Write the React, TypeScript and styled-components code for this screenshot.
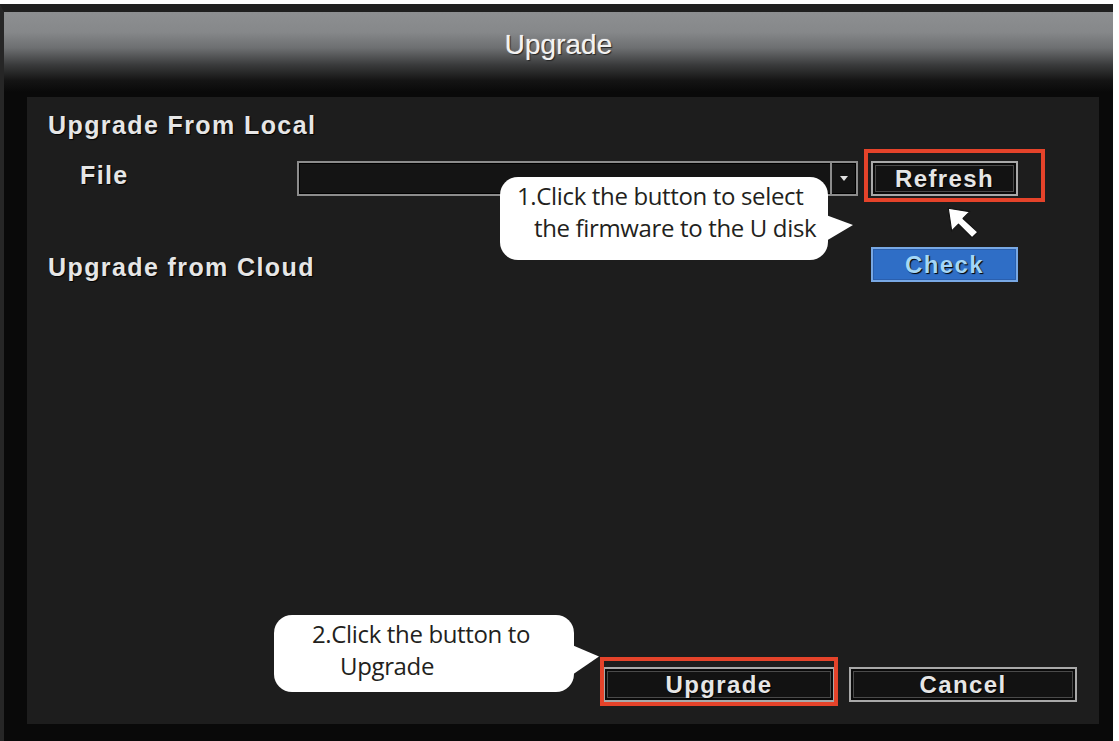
import React from "react";
import styled, { createGlobalStyle } from "styled-components";

const GlobalStyle = createGlobalStyle`
  html, body {
    margin: 0;
    padding: 0;
    background: #ffffff;
  }
  body {
    width: 1119px;
    height: 741px;
    overflow: hidden;
    font-family: "Liberation Sans", Arial, sans-serif;
  }
`;

const Window = styled.div`
  margin-top: 4px;
  width: 1113px;
  height: 737px;
  box-sizing: border-box;
  background: #090909;
  border-top: 8px solid #1f1f1f;
  border-left: 4px solid #262626;
  display: flex;
  flex-direction: column;
`;

const TitleBar = styled.div`
  height: 80px;
  flex-shrink: 0;
  display: flex;
  align-items: flex-start;
  justify-content: center;
  padding-top: 17px;
  box-sizing: border-box;
  background: linear-gradient(
    to bottom,
    #8d8f91 0%,
    #86888a 25%,
    #6d6f71 45%,
    #3a3b3c 66%,
    #141414 86%,
    #090909 100%
  );
`;

const Title = styled.div`
  font-size: 28px;
  line-height: 32px;
  color: #f2f2f2;
  text-shadow: 1px 1px 1px #222, 0 0 1px #fff;
`;

const Panel = styled.div`
  position: relative;
  flex: 1;
  margin: 5px 14px 17px 23px;
  background: #1d1d1d;
  padding: 14px 22px 22px 21px;
  display: flex;
  flex-direction: column;
`;

const Section = styled.div`
  padding-right: 59px;
  display: flex;
  flex-direction: column;
`;

const OsdText = styled.div<{ $indent?: number; $drop?: number }>`
  font-size: 25px;
  line-height: 28px;
  font-weight: bold;
  letter-spacing: 1.4px;
  color: #e6e6e6;
  text-shadow: 1px 1px 1px #000;
  padding-left: ${(p) => p.$indent ?? 0}px;
  margin-top: ${(p) => p.$drop ?? 0}px;
  white-space: nowrap;
`;

const Row = styled.div<{ $top: number }>`
  display: flex;
  align-items: center;
  margin-top: ${(p) => p.$top}px;
  height: 35px;
`;

const LabelCell = styled.div`
  width: 249px;
  flex-shrink: 0;
  align-self: flex-start;
`;

const Combo = styled.div`
  width: 561px;
  height: 35px;
  box-sizing: border-box;
  border: 2px solid #8c8c8c;
  background: #141414;
  box-shadow: inset 0 0 0 1px #000;
  display: flex;
  justify-content: flex-end;
`;

const ComboArrow = styled.div`
  width: 24px;
  border-left: 2px solid #8c8c8c;
  display: flex;
  align-items: center;
  justify-content: center;

  &::before {
    content: "";
    border-left: 4px solid transparent;
    border-right: 4px solid transparent;
    border-top: 5px solid #e0e0e0;
  }
`;

const OsdButton = styled.div<{ $width: number; $blue?: boolean }>`
  position: relative;
  width: ${(p) => p.$width}px;
  height: 35px;
  box-sizing: border-box;
  display: flex;
  align-items: center;
  justify-content: center;
  font-size: 24px;
  font-weight: bold;
  letter-spacing: 1.4px;
  text-shadow: 1px 1px 1px #000;
  background: ${(p) => (p.$blue ? "#2f6ec6" : "#121212")};
  color: ${(p) => (p.$blue ? "#a4d6f6" : "#e6e6e6")};
  border: 2px solid ${(p) => (p.$blue ? "#78a8e4" : "#a9a9a9")};
  box-shadow: ${(p) =>
    p.$blue
      ? "inset 0 0 0 1px #2a5fae"
      : "inset 0 0 0 2px #0a0a0a, inset 0 0 0 3px #4a4a4a"};
`;

const Spacer = styled.div`
  flex: 1;
`;

const Footer = styled.div`
  margin-top: auto;
  display: flex;
  justify-content: flex-end;
  gap: 14px;
`;

const Highlight = styled.div<{ $t: number; $r: number; $b: number; $l: number }>`
  position: absolute;
  top: -${(p) => p.$t}px;
  right: -${(p) => p.$r}px;
  bottom: -${(p) => p.$b}px;
  left: -${(p) => p.$l}px;
  border: 4px solid #e5432a;
  pointer-events: none;
`;

const Bubble = styled.div<{
  $left: number;
  $top: number;
  $w: number;
  $h: number;
  $tailTop: number;
  $tailH: number;
}>`
  position: absolute;
  left: ${(p) => p.$left}px;
  top: ${(p) => p.$top}px;
  width: ${(p) => p.$w}px;
  height: ${(p) => p.$h}px;
  box-sizing: border-box;
  background: #ffffff;
  border-radius: 18px;
  font-family: "Open Sans", "Noto Sans", sans-serif;
  font-size: 24px;
  letter-spacing: -0.35px;
  color: #231f20;
  padding-top: 3px;

  &::after {
    content: "";
    position: absolute;
    left: calc(100% - 2px);
    top: ${(p) => p.$tailTop}px;
    width: 27px;
    height: ${(p) => p.$tailH}px;
    background: #ffffff;
    clip-path: polygon(0 0, 100% 38%, 0 100%);
  }
`;

const BubbleLine = styled.div<{ $indent: number }>`
  padding-left: ${(p) => p.$indent}px;
  line-height: 32px;
  white-space: nowrap;
`;

const Cursor = styled.svg`
  position: absolute;
  left: 919px;
  top: 109px;
`;

export default function App() {
  return (
    <>
      <GlobalStyle />
      <Window>
        <TitleBar>
          <Title>Upgrade</Title>
        </TitleBar>
        <Panel>
          <Section>
            <OsdText>Upgrade From Local</OsdText>
            <Row $top={22}>
              <LabelCell>
                <OsdText $indent={32}>File</OsdText>
              </LabelCell>
              <Combo>
                <ComboArrow />
              </Combo>
              <Spacer />
              <OsdButton $width={147}>
                Refresh
                <Highlight $t={14} $r={29} $b={8} $l={9} />
              </OsdButton>
            </Row>
            <Row $top={51}>
              <OsdText $drop={5}>Upgrade from Cloud</OsdText>
              <Spacer />
              <OsdButton $width={147} $blue>
                Check
              </OsdButton>
            </Row>
          </Section>

          <Footer>
            <OsdButton $width={232}>
              Upgrade
              <Highlight $t={12} $r={5} $b={6} $l={5} />
            </OsdButton>
            <OsdButton $width={228}>Cancel</OsdButton>
          </Footer>

          <Bubble $left={473} $top={80} $w={328} $h={83} $tailTop={38} $tailH={26}>
            <BubbleLine $indent={17}>1.Click the button to select</BubbleLine>
            <BubbleLine $indent={34}>the firmware to the U disk</BubbleLine>
          </Bubble>

          <Bubble $left={247} $top={518} $w={300} $h={77} $tailTop={30} $tailH={30}>
            <BubbleLine $indent={38}>2.Click the button to</BubbleLine>
            <BubbleLine $indent={66}>Upgrade</BubbleLine>
          </Bubble>

          <Cursor width="34" height="34" viewBox="0 0 30 30">
            <polygon
              points="2,2 21,5 15,11 28,23 23,28 11,16 5,22"
              fill="#ffffff"
              stroke="#111"
              strokeWidth="1"
              strokeLinejoin="round"
            />
          </Cursor>
        </Panel>
      </Window>
    </>
  );
}
